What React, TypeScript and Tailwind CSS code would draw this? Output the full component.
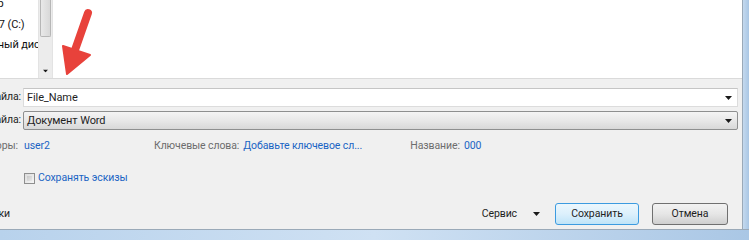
import React from 'react';

const font = "font-['Segoe_UI','Roboto','Noto_Sans',sans-serif]";

function Arrow() {
  return (
    <svg className="absolute left-0 top-0" width="120" height="80" viewBox="0 0 120 80">
      <line x1="88" y1="13" x2="75" y2="50" stroke="#e8423b" strokeWidth="8" strokeLinecap="round" />
      <polygon points="63,46 90,55 67,74" fill="#e8423b" stroke="#e8423b" strokeWidth="2" strokeLinejoin="round" />
    </svg>
  );
}

function Caret({ className = '' }: { className?: string }) {
  return (
    <svg className={className} width="7" height="4" viewBox="0 0 7 4">
      <polygon points="0,0 7,0 3.5,4" fill="#1a1a1a" />
    </svg>
  );
}

// field label whose left part is cut off by the window edge
function Label({ text }: { text: string }) {
  return (
    <div className="w-[21px] shrink-0 flex justify-end overflow-hidden whitespace-nowrap text-[#1e1e1e]">
      {text}
    </div>
  );
}

export default function App() {
  return (
    <div className={`w-[749px] h-[240px] overflow-hidden flex flex-col bg-[#f0f0f0] text-[10.5px] tracking-[-0.1px] leading-none ${font}`}>
      <div className="flex flex-1 min-h-0">
        <div className="flex-1 flex flex-col">
          {/* browser area */}
          <div className="relative h-[79px] flex border-b border-[#dadada] bg-white">
            <div className="w-[38px] overflow-hidden whitespace-nowrap text-[11px] text-[#111] flex flex-col">
              <span className="-ml-[55px] -mt-[2px] h-[20px]">Компьютер</span>
              <span className="-ml-[48px] h-[20px] mt-[1px]">Windows 7 (C:)</span>
              <span className="-ml-[40px] h-[20px]">Локальный диск (D:)</span>
            </div>
            <div className="w-[15px] flex flex-col bg-[#ececec] border-x border-[#e3e3e3]">
              <div className="h-[37px] mx-[1px] rounded-b-[2px] border border-t-0 border-[#b6b6b6] bg-gradient-to-r from-[#e9e9e9] to-[#d8d8d8]" />
              <div className="flex-1" />
              <div className="h-[14px] flex items-center justify-center">
                <Caret className="scale-75" />
              </div>
            </div>
            <div className="flex-1" />
            <Arrow />
          </div>

          {/* form */}
          <div className="flex-1 flex flex-col pr-[4px]">
            <div className="flex items-center gap-[2px] mt-[9px]">
              <Label text="Имя файла:" />
              <div className="flex-1 h-[19px] flex items-center justify-between bg-white border border-[#dcdcdc] border-t-[#c5c5c5] pl-[3px] pr-[5px] text-[11px] text-[#1e1e1e]">
                <span>File_Name</span>
                <Caret />
              </div>
            </div>
            <div className="flex items-center gap-[2px] mt-[4px]">
              <Label text="Тип файла:" />
              <div className="flex-1 h-[19px] flex items-center justify-between rounded-[2px] bg-gradient-to-b from-[#f4f4f4] via-[#e8e8e8] to-[#d8d8d8] border border-[#8e8f8f] pl-[3px] pr-[5px] text-[11px] text-[#1e1e1e]">
                <span>Документ Word</span>
                <Caret />
              </div>
            </div>

            <div className="flex items-center mt-[10px] h-[12px] whitespace-nowrap">
              <div className="w-[18px] flex justify-end overflow-hidden text-[#6d6d6d]">Авторы:</div>
              <span className="ml-[6px] w-[130px] text-[#1a64c4]">user2</span>
              <span className="text-[#6d6d6d]">Ключевые слова:</span>
              <span className="ml-[4px] w-[167px] text-[#1a64c4]">Добавьте ключевое сл...</span>
              <span className="text-[#6d6d6d]">Название:</span>
              <span className="ml-[4px] text-[#1a64c4]">000</span>
            </div>

            <div className="flex items-center ml-[24px] mt-[21px] gap-[3px]">
              <div className="w-[11px] h-[11px] border border-[#8f8f8f] bg-gradient-to-br from-[#dcdcdc] to-[#f6f6f6] p-[2px]">
                <div className="w-full h-full bg-gradient-to-br from-[#c8c8c8] to-[#e9e9e9]" />
              </div>
              <span className="text-[#1a64c4]">Сохранять эскизы</span>
            </div>

            <div className="flex items-center mt-[19px]">
              <div className="w-[10px] flex justify-end overflow-hidden whitespace-nowrap text-[#1e1e1e]">Скрыть папки</div>
              <div className="flex-1" />
              <span className="text-[#1e1e1e]">Сервис</span>
              <Caret className="ml-[16px]" />
              <button className="ml-[15px] w-[84px] h-[22px] rounded-[3px] border border-[#3c9be0] bg-gradient-to-b from-[#ecf7fd] via-[#dcf0fc] to-[#bfe4f8] text-[#1e1e1e] flex items-center justify-center">
                Сохранить
              </button>
              <button className="ml-[13px] mr-[10px] w-[76px] h-[22px] rounded-[3px] border border-[#707070] bg-gradient-to-b from-[#f2f2f2] via-[#e6e6e6] to-[#cfcfcf] text-[#1e1e1e] flex items-center justify-center">
                Отмена
              </button>
            </div>
          </div>
        </div>
        {/* window frame, right */}
        <div className="w-[7px] border-l border-[#9aa9b8] bg-gradient-to-r from-[#c4d9ee] to-[#a9c6e4]" />
      </div>
      {/* window frame, bottom */}
      <div className="h-[11px] border-t border-[#9aa9b8] bg-gradient-to-r from-[#b8d2ec] via-[#cfe1f3] to-[#aac7e5]" />
    </div>
  );
}
